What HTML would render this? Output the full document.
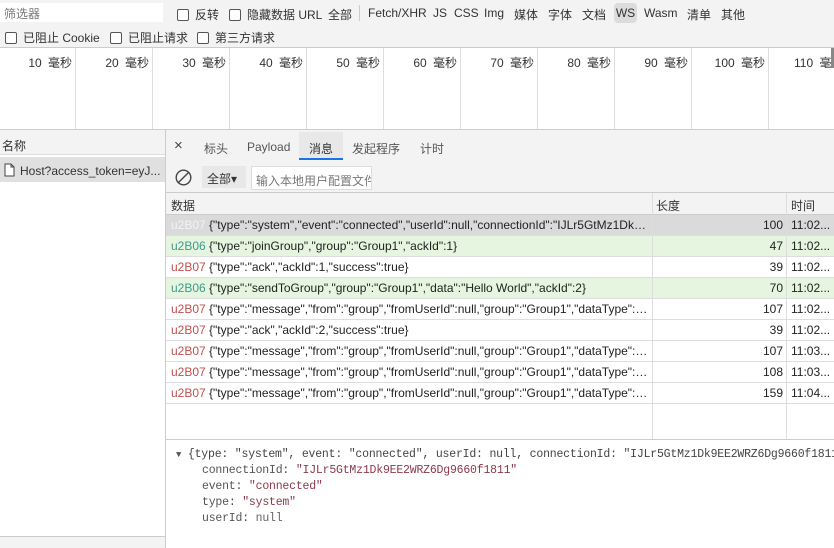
<!DOCTYPE html>
<html><head><meta charset="utf-8"><style>
*{margin:0;padding:0;box-sizing:border-box}
body{width:834px;height:548px;overflow:hidden;background:#fff;font-family:"Liberation Sans","Noto Sans CJK SC",sans-serif;font-size:12px;color:#333;position:relative}
.a{position:absolute;white-space:nowrap}
.cb{display:inline-block;width:12px;height:12px;border:1px solid #555;border-radius:2px;vertical-align:-2px;margin-right:6px;background:#fff}
.tl{position:absolute;top:48px;height:82px;border-left:1px solid #ddd}
.lab{position:absolute;top:54px;text-align:right;width:70px;word-spacing:3px}
.row{position:absolute;left:166px;width:668px;height:21px;border-bottom:1px solid #ddd;line-height:20px;font-size:12px;white-space:nowrap}
.row>span{position:absolute;display:block;top:0}
.row .d{left:5px;width:478px;overflow:hidden;text-overflow:ellipsis;color:#222}
.row .l{left:486px;width:131px;text-align:right;color:#222}
.row .t{left:625px;color:#222}
.r{color:#c0504d}.g{color:#3f9a8c}
.mono{font-family:"Liberation Mono","DejaVu Sans Mono",monospace;font-size:11.5px;letter-spacing:-0.2px;color:#444}
.k{color:#555}.s{color:#8b3a4a}
</style></head><body>
<div class="a" style="left:0;top:0;width:834px;height:48px;background:#f3f3f3;border-bottom:1px solid #ccc"></div>
<div class="a" style="left:0;top:3px;width:163px;height:19px;background:#fff;color:#777;padding:2px 4px">筛选器</div>
<div class="a" style="left:177px;top:6px"><span class="cb"></span>反转</div>
<div class="a" style="left:229px;top:6px"><span class="cb"></span>隐藏数据 URL</div>
<div class="a" style="left:328px;top:6px">全部</div>
<div class="a" style="left:359px;top:5px;height:16px;border-left:1px solid #ccc"></div>
<div class="a" style="left:368px;top:6px">Fetch/XHR</div>
<div class="a" style="left:433px;top:6px">JS</div>
<div class="a" style="left:454px;top:6px">CSS</div>
<div class="a" style="left:484px;top:6px">Img</div>
<div class="a" style="left:514px;top:6px">媒体</div>
<div class="a" style="left:548px;top:6px">字体</div>
<div class="a" style="left:582px;top:6px">文档</div>
<div class="a" style="left:614px;top:3px;width:23px;height:20px;background:#dcdcdc;border-radius:4px;text-align:center;line-height:20px">WS</div>
<div class="a" style="left:644px;top:6px">Wasm</div>
<div class="a" style="left:687px;top:6px">清单</div>
<div class="a" style="left:721px;top:6px">其他</div>
<div class="a" style="left:5px;top:29px"><span class="cb"></span>已阻止 Cookie</div>
<div class="a" style="left:110px;top:29px"><span class="cb"></span>已阻止请求</div>
<div class="a" style="left:197px;top:29px"><span class="cb"></span>第三方请求</div>
<div class="tl" style="left:75px"></div><div class="tl" style="left:152px"></div><div class="tl" style="left:229px"></div><div class="tl" style="left:306px"></div><div class="tl" style="left:383px"></div><div class="tl" style="left:460px"></div><div class="tl" style="left:537px"></div><div class="tl" style="left:614px"></div><div class="tl" style="left:691px"></div><div class="tl" style="left:768px"></div>
<div class="lab" style="left:2px">10 毫秒</div><div class="lab" style="left:79px">20 毫秒</div><div class="lab" style="left:156px">30 毫秒</div><div class="lab" style="left:233px">40 毫秒</div><div class="lab" style="left:310px">50 毫秒</div><div class="lab" style="left:387px">60 毫秒</div><div class="lab" style="left:464px">70 毫秒</div><div class="lab" style="left:541px">80 毫秒</div><div class="lab" style="left:618px">90 毫秒</div><div class="lab" style="left:695px">100 毫秒</div><div class="a" style="left:794px;top:54px;word-spacing:3px">110 毫秒</div>
<div class="a" style="left:831px;top:48px;width:3px;height:20px;background:#888"></div>
<div class="a" style="left:0;top:129px;width:834px;border-top:1px solid #ccc"></div>
<div class="a" style="left:0;top:130px;width:165px;height:25px;background:#f3f3f3;border-bottom:1px solid #ddd;padding:7px 2px">名称</div>
<div class="a" style="left:0;top:157px;width:165px;height:25px;background:#e0e0e0;padding:6px 4px"><svg width="11" height="14" viewBox="0 0 11 14" style="vertical-align:-2px;margin-right:5px"><path d="M1 1h6l3 3v9H1z M7 1v3h3" fill="#fff" stroke="#444"/></svg>Host?access_token=eyJ...</div>
<div class="a" style="left:0;top:536px;width:165px;height:12px;background:#f3f3f3;border-top:1px solid #ccc"></div>
<div class="a" style="left:165px;top:130px;height:418px;border-left:1px solid #ccc"></div>
<div class="a" style="left:166px;top:130px;width:668px;height:30px;background:#f3f3f3"></div>
<div class="a" style="left:174px;top:137px;font-size:15px;color:#444">×</div>
<div class="a" style="left:204px;top:140px;color:#555">标头</div>
<div class="a" style="left:247px;top:140px;color:#555">Payload</div>
<div class="a" style="left:299px;top:132px;width:44px;height:28px;background:#e8e8e8;border-bottom:2px solid #1a73e8;text-align:center;padding-top:8px">消息</div>
<div class="a" style="left:352px;top:140px;color:#555">发起程序</div>
<div class="a" style="left:420px;top:140px;color:#555">计时</div>
<div class="a" style="left:166px;top:160px;width:668px;height:33px;background:#f3f3f3;border-bottom:1px solid #ccc"></div>
<svg class="a" style="left:175px;top:169px" width="17" height="17" viewBox="0 0 17 17"><circle cx="8.5" cy="8.5" r="7.3" fill="none" stroke="#444" stroke-width="1.4"/><path d="M3.5 13.5L13.5 3.5" stroke="#444" stroke-width="1.4"/></svg>
<div class="a" style="left:202px;top:166px;width:44px;height:22px;background:#e8e8e8;padding:4px 5px">全部▾</div>
<div class="a" style="left:251px;top:166px;width:121px;height:24px;background:#fff;border:1px solid #ddd;padding:5px 4px;overflow:hidden;color:#777">输入本地用户配置文件</div>
<div class="a" style="left:166px;top:193px;width:668px;height:22px;background:#f3f3f3;border-bottom:1px solid #ccc;padding:4px 5px">数据</div>
<div class="a" style="left:656px;top:197px">长度</div>
<div class="a" style="left:791px;top:197px">时间</div>
<div class="a" style="left:166px;top:215px;width:668px;height:21px;background:#dadada"></div>
<div class="a" style="left:166px;top:236px;width:668px;height:21px;background:#e5f5df"></div>
<div class="a" style="left:166px;top:278px;width:668px;height:21px;background:#e5f5df"></div>
<div class="row" style="top:215px"><span class="d"><span style="color:#f3f3f3">u2B07</span> {"type":"system","event":"connected","userId":null,"connectionId":"IJLr5GtMz1Dk9EE2WRZ6Dg9660f1811"}</span><span class="l">100</span><span class="t">11:02...</span></div>
<div class="row" style="top:236px"><span class="d"><span class="g">u2B06</span> {"type":"joinGroup","group":"Group1","ackId":1}</span><span class="l">47</span><span class="t">11:02...</span></div>
<div class="row" style="top:257px"><span class="d"><span class="r">u2B07</span> {"type":"ack","ackId":1,"success":true}</span><span class="l">39</span><span class="t">11:02...</span></div>
<div class="row" style="top:278px"><span class="d"><span class="g">u2B06</span> {"type":"sendToGroup","group":"Group1","data":"Hello World","ackId":2}</span><span class="l">70</span><span class="t">11:02...</span></div>
<div class="row" style="top:299px"><span class="d"><span class="r">u2B07</span> {"type":"message","from":"group","fromUserId":null,"group":"Group1","dataType":"text","data":"Hello World"}</span><span class="l">107</span><span class="t">11:02...</span></div>
<div class="row" style="top:320px"><span class="d"><span class="r">u2B07</span> {"type":"ack","ackId":2,"success":true}</span><span class="l">39</span><span class="t">11:02...</span></div>
<div class="row" style="top:341px"><span class="d"><span class="r">u2B07</span> {"type":"message","from":"group","fromUserId":null,"group":"Group1","dataType":"text","data":"Hello World"}</span><span class="l">107</span><span class="t">11:03...</span></div>
<div class="row" style="top:362px"><span class="d"><span class="r">u2B07</span> {"type":"message","from":"group","fromUserId":null,"group":"Group1","dataType":"text","data":"Hello World"}</span><span class="l">108</span><span class="t">11:03...</span></div>
<div class="row" style="top:383px"><span class="d"><span class="r">u2B07</span> {"type":"message","from":"group","fromUserId":null,"group":"Group1","dataType":"text","data":"Hello World"}</span><span class="l">159</span><span class="t">11:04...</span></div>
<div class="a" style="left:652px;top:193px;height:247px;border-left:1px solid #ddd"></div>
<div class="a" style="left:786px;top:193px;height:247px;border-left:1px solid #ddd"></div>
<div class="a" style="left:166px;top:439px;width:668px;border-top:1px solid #ccc"></div>
<div class="a mono" style="left:176px;top:448px"><span style="font-size:9px;color:#555">▼</span> {type: "system", event: "connected", userId: null, connectionId: "IJLr5GtMz1Dk9EE2WRZ6Dg9660f1811"}</div>
<div class="a mono" style="left:202px;top:464px"><span class="k">connectionId</span>: <span class="s">"IJLr5GtMz1Dk9EE2WRZ6Dg9660f1811"</span></div>
<div class="a mono" style="left:202px;top:480px"><span class="k">event</span>: <span class="s">"connected"</span></div>
<div class="a mono" style="left:202px;top:496px"><span class="k">type</span>: <span class="s">"system"</span></div>
<div class="a mono" style="left:202px;top:512px"><span class="k">userId</span>: <span style="color:#666">null</span></div>
</body></html>
